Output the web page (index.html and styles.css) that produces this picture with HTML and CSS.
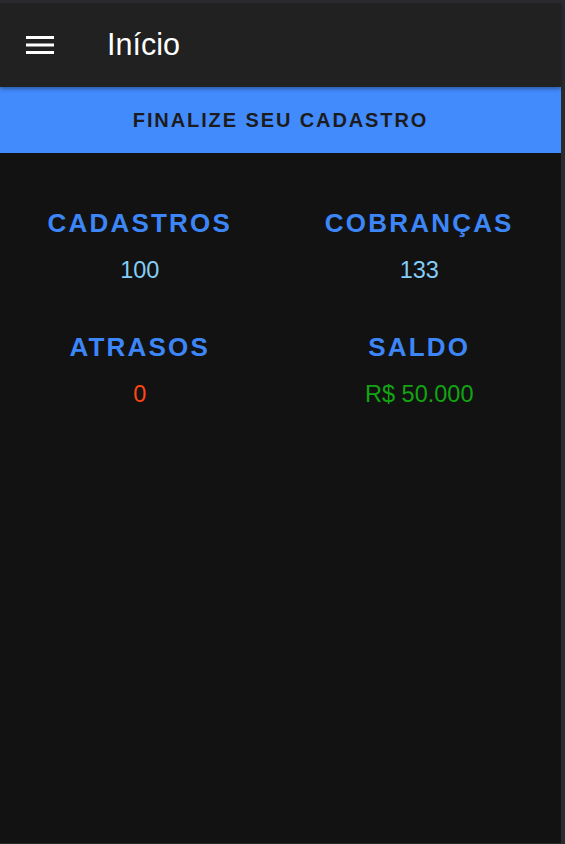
FILE: index.html
```html
<!DOCTYPE html>
<html lang="pt-BR">
<head>
<meta charset="utf-8">
<title>Início</title>
<link rel="stylesheet" href="styles.css">
</head>
<body>
<div class="app">
  <header class="topbar">
    <button class="menu-btn" aria-label="menu">
      <svg width="28" height="18" viewBox="0 0 28 18"><rect x="0" y="0" width="28" height="3" fill="#fff"/><rect x="0" y="7.5" width="28" height="3" fill="#fff"/><rect x="0" y="15" width="28" height="3" fill="#fff"/></svg>
    </button>
    <h1 class="title">Início</h1>
  </header>
  <div class="banner">FINALIZE SEU CADASTRO</div>
  <main class="stats">
    <div class="stat">
      <div class="stat-label">CADASTROS</div>
      <div class="stat-value v-blue">100</div>
    </div>
    <div class="stat">
      <div class="stat-label">COBRANÇAS</div>
      <div class="stat-value v-blue">133</div>
    </div>
    <div class="stat">
      <div class="stat-label">ATRASOS</div>
      <div class="stat-value v-red">0</div>
    </div>
    <div class="stat">
      <div class="stat-label">SALDO</div>
      <div class="stat-value v-green">R$ 50.000</div>
    </div>
  </main>
</div>
</body>
</html>
```

FILE: styles.css
```css
html, body {
  margin: 0;
  padding: 0;
}
body {
  background: #2b2b2f;
  padding: 3px 4px 1px 0;
  box-sizing: border-box;
  height: 844px;
  font-family: "Liberation Sans", Arial, sans-serif;
  overflow: hidden;
}
.app {
  width: 561px;
  height: 840px;
  background: #121212;
  display: flex;
  flex-direction: column;
}
.topbar {
  height: 84px;
  flex: none;
  background: #212121;
  display: flex;
  align-items: center;
  padding-left: 26px;
  position: relative;
  z-index: 2;
  box-shadow: 0 2px 4px rgba(0,0,0,0.35);
}
.menu-btn {
  background: none;
  border: 0;
  padding: 0;
  margin: 0;
  width: 28px;
  height: 18px;
  display: flex;
}
.title {
  margin: 0 0 0 53px;
  font-size: 30.5px;
  font-weight: 400;
  color: #ffffff;
  line-height: 1;
  margin-top: -2px;
}
.banner {
  height: 66px;
  flex: none;
  background: #428bfd;
  color: #1c1c1e;
  display: flex;
  align-items: center;
  justify-content: center;
  font-weight: 700;
  font-size: 20px;
  letter-spacing: 1.9px;
}
.stats {
  display: grid;
  grid-template-columns: 1fr 1fr;
  row-gap: 47px;
  padding-top: 55px;
  padding-right: 2px;
}
.stat {
  display: flex;
  flex-direction: column;
  align-items: center;
  text-align: center;
}
.stat-label {
  font-size: 26px;
  font-weight: 700;
  letter-spacing: 2.2px;
  line-height: 30px;
  color: #3d86f7;
}
.stat-value {
  margin-top: 17px;
  font-size: 23.5px;
  line-height: 30px;
}
.v-blue { color: #84cdf6; }
.v-red { color: #ff4515; }
.v-green { color: #12a412; }
```
